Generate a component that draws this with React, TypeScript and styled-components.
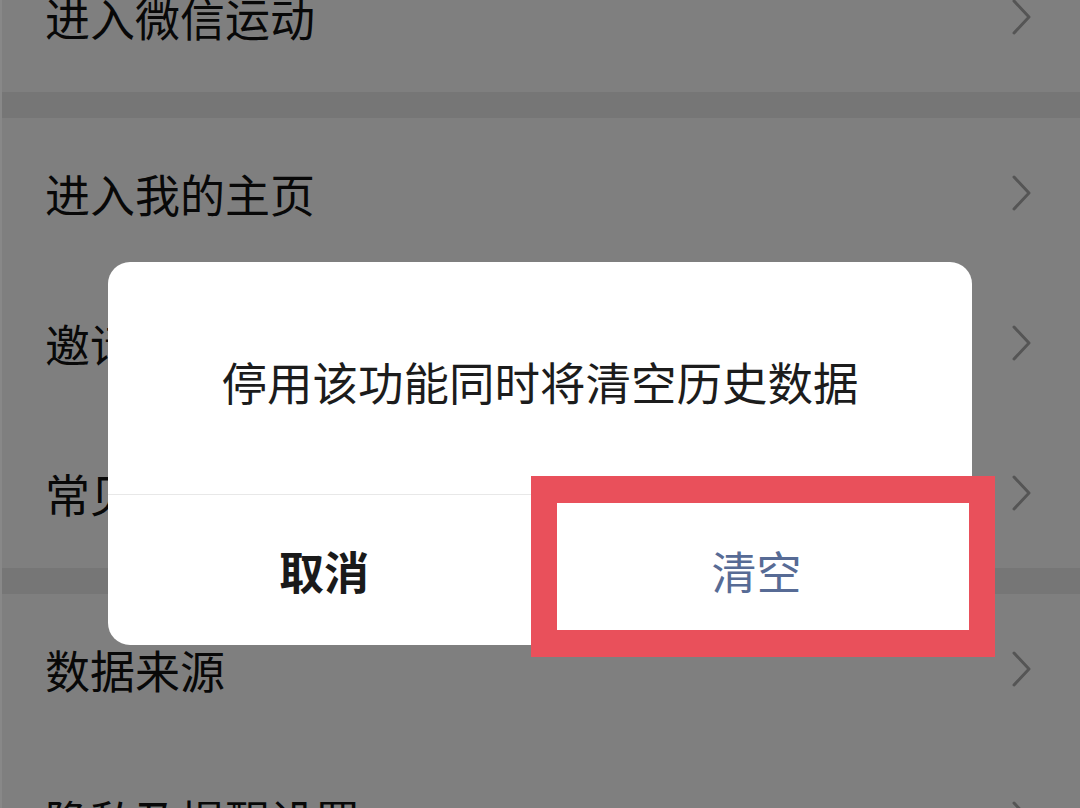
import React from "react";
import styled, { createGlobalStyle } from "styled-components";

const GlobalStyle = createGlobalStyle`
  html, body {
    margin: 0;
    padding: 0;
    background: #ffffff;
    overflow: hidden;
  }
  body {
    font-family: "Noto Sans CJK SC", "Noto Sans", sans-serif;
  }
`;

const Page = styled.div`
  position: relative;
  width: 1080px;
  height: 808px;
  overflow: hidden;
  background: #ffffff;
  border-left: 2px solid #888888;
  box-sizing: border-box;
`;

const List = styled.div`
  display: flex;
  flex-direction: column;
  margin-top: -58px;
`;

const Section = styled.div`
  display: flex;
  flex-direction: column;
  background: #ffffff;
`;

const Gap = styled.div`
  height: 26px;
  background: #ececec;
`;

const Row = styled.div`
  display: flex;
  align-items: center;
  justify-content: space-between;
  height: 150px;
  padding: 0 49px 0 43px;
`;

const RowLabel = styled.div`
  font-size: 45px;
  color: #111111;
  line-height: 1;
`;

const Overlay = styled.div`
  position: absolute;
  inset: 0;
  background: rgba(0, 0, 0, 0.5);
  display: flex;
  justify-content: center;
  align-items: flex-start;
  padding-top: 262px;
`;

const Dialog = styled.div`
  position: relative;
  width: 864px;
  margin-left: -2px;
  background: #ffffff;
  border-radius: 22px;
  display: flex;
  flex-direction: column;
`;

const Message = styled.div`
  height: 233px;
  display: flex;
  align-items: center;
  justify-content: center;
  padding-top: 6px;
  box-sizing: border-box;
  font-size: 45.5px;
  color: #1c1c1c;
  border-bottom: 1px solid #e8e8e8;
`;

const Actions = styled.div`
  display: grid;
  grid-template-columns: 1fr 1fr;
  height: 150px;
`;

const Action = styled.div<{ $primary?: boolean }>`
  display: flex;
  align-items: center;
  justify-content: center;
  font-size: 45px;
  font-weight: ${(p) => (p.$primary ? 400 : 600)};
  color: ${(p) => (p.$primary ? "#576b95" : "#1a1a1a")};
  border-left: ${(p) => (p.$primary ? "1px solid #e8e8e8" : "none")};
`;

const Highlight = styled.div`
  position: absolute;
  left: 423px;
  top: 214px;
  width: 464px;
  height: 181px;
  box-sizing: border-box;
  border: 26px solid #e9505b;
  border-top-width: 27px;
  border-bottom-width: 27px;
  pointer-events: none;
`;

function Chevron() {
  return (
    <svg width="20" height="36" viewBox="0 0 20 36" fill="none">
      <polyline
        points="3,2 18,18 3,34"
        stroke="#aaaaaa"
        strokeWidth="3"
        strokeLinecap="round"
        strokeLinejoin="round"
      />
    </svg>
  );
}

const sections = [
  ["进入微信运动"],
  ["进入我的主页", "邀请好友", "常见问题"],
  ["数据来源", "隐私及提醒设置"],
];

export default function App() {
  return (
    <>
      <GlobalStyle />
      <Page>
        <List>
          {sections.map((items, i) => (
            <React.Fragment key={i}>
              {i > 0 && <Gap />}
              <Section>
                {items.map((label) => (
                  <Row key={label}>
                    <RowLabel>{label}</RowLabel>
                    <Chevron />
                  </Row>
                ))}
              </Section>
            </React.Fragment>
          ))}
        </List>
        <Overlay>
          <Dialog>
            <Message>停用该功能同时将清空历史数据</Message>
            <Actions>
              <Action>取消</Action>
              <Action $primary>清空</Action>
            </Actions>
            <Highlight />
          </Dialog>
        </Overlay>
      </Page>
    </>
  );
}
